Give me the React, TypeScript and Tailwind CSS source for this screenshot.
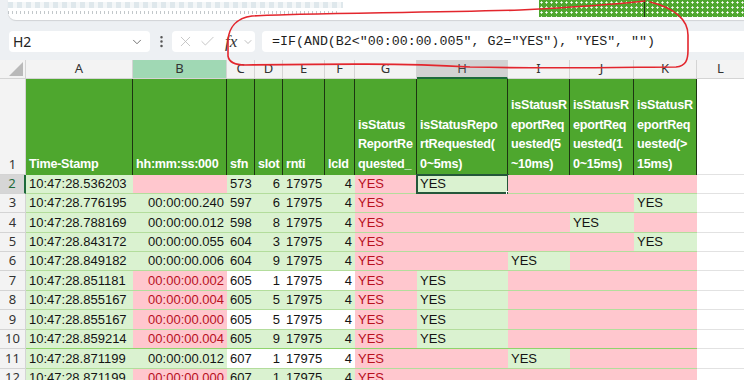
import React from "react";
import { ChevronDown, EllipsisVertical, X, Check } from "lucide-react";

type Fill = "g" | "p" | "w";

const COLS = [107, 94, 28, 28, 42, 30, 62, 91, 62, 64, 63];
const LETTERS = ["A", "B", "C", "D", "E", "F", "G", "H", "I", "J", "K", "L"];
const ROW_H = [19, 19, 20, 19, 19, 20, 19, 20, 19, 20, 19];

type Row = {
  a: string;
  b: string;
  bf: Fill;
  c: string;
  d: string;
  cf: Fill;
  yes: "H" | "I" | "J" | "K" | "";
};

const ROWS: Row[] = [
  { a: "10:47:28.536203", b: "", bf: "p", c: "573", d: "6", cf: "g", yes: "H" },
  { a: "10:47:28.776195", b: "00:00:00.240", bf: "g", c: "597", d: "6", cf: "g", yes: "K" },
  { a: "10:47:28.788169", b: "00:00:00.012", bf: "g", c: "598", d: "8", cf: "g", yes: "J" },
  { a: "10:47:28.843172", b: "00:00:00.055", bf: "g", c: "604", d: "3", cf: "g", yes: "K" },
  { a: "10:47:28.849182", b: "00:00:00.006", bf: "g", c: "604", d: "9", cf: "g", yes: "I" },
  { a: "10:47:28.851181", b: "00:00:00.002", bf: "p", c: "605", d: "1", cf: "w", yes: "H" },
  { a: "10:47:28.855167", b: "00:00:00.004", bf: "p", c: "605", d: "5", cf: "g", yes: "H" },
  { a: "10:47:28.855167", b: "00:00:00.000", bf: "p", c: "605", d: "5", cf: "w", yes: "H" },
  { a: "10:47:28.859214", b: "00:00:00.004", bf: "p", c: "605", d: "9", cf: "g", yes: "H" },
  { a: "10:47:28.871199", b: "00:00:00.012", bf: "g", c: "607", d: "1", cf: "w", yes: "I" },
  { a: "10:47:28.871199", b: "00:00:00.000", bf: "p", c: "607", d: "1", cf: "g", yes: "" },
];

const HEADERS: string[][] = [
  ["Time-Stamp"],
  ["hh:mm:ss:000"],
  ["sfn"],
  ["slot"],
  ["rnti"],
  ["lcId"],
  ["isStatus", "ReportRe", "quested_"],
  ["isStatusRepo", "rtRequested(", "0~5ms)"],
  ["isStatusR", "eportReq", "uested(5", "~10ms)"],
  ["isStatusR", "eportReq", "uested(1", "0~15ms)"],
  ["isStatusR", "eportReq", "uested(>", "15ms)"],
];

const fillClass = (f: Fill) =>
  f === "g" ? "bg-[#daf2d0]" : f === "p" ? "bg-[#ffc7ce]" : "bg-white";

function Cell({
  fill,
  text,
  right,
  red,
  h,
  bottom,
  children,
}: {
  fill: Fill;
  text?: string;
  right?: boolean;
  red?: boolean;
  h: number;
  bottom: string;
  children?: React.ReactNode;
}) {
  return (
    <div
      className={`relative flex items-end whitespace-nowrap border-b text-[13px] ${bottom} ${fillClass(fill)} ${
        right ? "justify-end pr-[3px]" : "justify-start pl-[3px]"
      } ${red ? "text-[#b8101e]" : "text-[#141414]"}`}
      style={{ height: h }}
    >
      <span className="leading-[18px]">{text}</span>
      {children}
    </div>
  );
}

export default function App() {
  return (
    <div
      className="relative w-[744px] h-[380px] overflow-hidden bg-[#edf0f3]"
      style={{ fontFamily: '"Liberation Sans", Arial, sans-serif' }}
    >
      {/* top ribbon fragment */}
      <div className="h-[20px] flex">
        <div className="w-[8px]" />
        <div className="flex-1 bg-white rounded-bl-[8px] shadow-[0_1px_1px_rgba(0,0,0,0.12)] flex">
          <div className="w-[340px] flex flex-col pt-[2px] gap-[3px]">
            <div className="h-[6px] w-[335px] bg-[repeating-linear-gradient(90deg,#dfe8ec_0px,#dfe8ec_5px,#f4f7f8_5px,#f4f7f8_9px)]" />
            <div className="h-[3px] w-[330px] bg-[repeating-linear-gradient(90deg,#9aa3a8_0px,#9aa3a8_1px,transparent_1px,transparent_4px)] opacity-60" />
          </div>
          <div className="w-[191px]" />
          <div className="h-[17px] w-[106px] bg-[#4ea72e] bg-[radial-gradient(#ffffff_28%,transparent_29%)] bg-[length:5px_5px] border-r border-[#1f3a14]" />
          <div className="h-[17px] flex-1 bg-[#4ea72e] bg-[radial-gradient(#ffffff_28%,transparent_29%)] bg-[length:5px_5px]" />
        </div>
      </div>

      {/* formula bar */}
      <div className="h-[40px] flex items-start pt-[11px] pl-[9px]">
        <div className="w-[141px] h-[21px] bg-white rounded-[4px] flex items-center justify-between pl-[4px] pr-[6px]">
          <span
            className="text-[14px] text-[#222]"
            style={{ fontFamily: '"Noto Sans", sans-serif' }}
          >
            H2
          </span>
          <ChevronDown size={14} strokeWidth={1.4} className="text-[#555]" />
        </div>
        <div className="w-[22px] h-[21px] flex items-center justify-center">
          <EllipsisVertical size={15} strokeWidth={2} className="text-[#555]" />
        </div>
        <div className="w-[83px] h-[21px] bg-white rounded-[4px] flex items-center pl-[5px] gap-[5px]">
          <X size={17} strokeWidth={1.1} className="text-[#b8b8b8]" />
          <Check size={17} strokeWidth={1.1} className="text-[#b8b8b8]" />
          <span
            className="italic text-[17px] leading-none text-[#333] ml-[4px]"
            style={{ fontFamily: '"Liberation Serif", serif' }}
          >
            fx
          </span>
          <ChevronDown size={12} strokeWidth={1.3} className="text-[#9a9a9a]" />
        </div>
        <div className="ml-[7px] flex-1 h-[21px] bg-white rounded-l-[4px] flex items-center pl-[10px]">
          <span
            className="text-[13.3px] text-[#1e1e1e] whitespace-pre"
            style={{ fontFamily: '"Liberation Mono", monospace' }}
          >
            {'=IF(AND(B2<"00:00:00.005", G2="YES"), "YES", "")'}
          </span>
        </div>
      </div>

      {/* sheet */}
      <div className="flex">
        {/* row header column */}
        <div className="w-[26px] flex flex-col" style={{ fontFamily: '"Noto Sans", sans-serif' }}>
          <div className="h-[19px] bg-[#f3f3f3] border-r border-b border-[#d4d4d4] relative">
            <div className="absolute right-[2px] bottom-[2px] w-0 h-0 border-l-[14px] border-l-transparent border-b-[14px] border-b-[#b9b9b9]" />
          </div>
          <div className="h-[96px] bg-[#f3f3f3] border-r border-b border-[#d4d4d4] flex items-end justify-center text-[13px] text-[#333] leading-[20px]">
            1
          </div>
          {ROWS.map((_, i) => (
            <div
              key={i}
              className={`flex items-end justify-center text-[13px] leading-[19px] border-b border-[#d4d4d4] ${
                i === 0
                  ? "bg-[#d6d6d6] text-[#1e6b3b] border-r-2 border-r-[#1e6b3b]"
                  : "bg-[#f3f3f3] text-[#333] border-r border-r-[#d4d4d4]"
              }`}
              style={{ height: ROW_H[i] }}
            >
              {i + 2}
            </div>
          ))}
        </div>

        {/* columns */}
        {COLS.map((w, ci) => {
          const letter = LETTERS[ci];
          return (
            <div key={ci} className="flex flex-col" style={{ width: w }}>
              <div
                className={`h-[19px] flex items-center justify-center text-[13px] border-r border-[#d4d4d4] ${
                  letter === "B"
                    ? "bg-[#a0d8b4] text-[#333] border-b border-b-[#d4d4d4]"
                    : letter === "H"
                    ? "bg-[#d2d2d2] text-[#444] border-b-2 border-b-[#1e6b3b]"
                    : "bg-[#f3f3f3] text-[#333] border-b border-b-[#d4d4d4]"
                }`}
                style={{ fontFamily: '"Noto Sans", sans-serif' }}
              >
                {letter}
              </div>
              <div className="h-[96px] bg-[#4ea72e] border-r border-[#1d3512] flex flex-col justify-end pl-[3px] pb-[1px] text-white font-bold text-[12.6px] tracking-[-0.25px] leading-[19.5px] whitespace-nowrap overflow-hidden">
                {HEADERS[ci].map((l, k) => (
                  <div key={k}>{l}</div>
                ))}
              </div>
              {ROWS.map((r, ri) => {
                const h = ROW_H[ri];
                const bottom = ri === 8 ? "border-[#8fd36c]" : "border-[#b3dd9c]";
                if (letter === "A") return <Cell key={ri} fill="g" text={r.a} h={h} bottom={bottom} />;
                if (letter === "B")
                  return <Cell key={ri} fill={r.bf} text={r.b} right red={r.bf === "p"} h={h} bottom={bottom} />;
                if (letter === "C") return <Cell key={ri} fill={r.cf} text={r.c} h={h} bottom={bottom} />;
                if (letter === "D") return <Cell key={ri} fill={r.cf} text={r.d} right h={h} bottom={bottom} />;
                if (letter === "E") return <Cell key={ri} fill={r.cf} text="17975" h={h} bottom={bottom} />;
                if (letter === "F") return <Cell key={ri} fill={r.cf} text="4" right h={h} bottom={bottom} />;
                if (letter === "G") return <Cell key={ri} fill="p" text="YES" red h={h} bottom={bottom} />;
                const isYes = r.yes === letter;
                return (
                  <Cell key={ri} fill={isYes ? "g" : "p"} text={isYes ? "YES" : ""} h={h} bottom={bottom}>
                    {letter === "H" && ri === 0 && (
                      <>
                        <div className="absolute inset-[-1px] border-2 border-[#24573a] pointer-events-none" />
                        <div className="absolute right-[-4px] bottom-[-4px] w-[6px] h-[6px] bg-[#24573a] border border-white" />
                      </>
                    )}
                  </Cell>
                );
              })}
            </div>
          );
        })}

        {/* column L */}
        <div className="flex-1 flex flex-col">
          <div
            className="h-[19px] flex items-center justify-center text-[13px] bg-[#f3f3f3] text-[#333] border-b border-[#d4d4d4]"
            style={{ fontFamily: '"Noto Sans", sans-serif' }}
          >
            L
          </div>
          <div className="h-[96px] bg-white border-b border-[#e2e2e2]" />
          {ROWS.map((_, ri) => (
            <div key={ri} className="bg-white border-b border-[#e2e2e2]" style={{ height: ROW_H[ri] }} />
          ))}
        </div>
      </div>

      {/* red hand-drawn annotation */}
      <svg className="absolute left-0 top-0 pointer-events-none" width="744" height="380" viewBox="0 0 744 380">
        <path
          d="M 645 1 C 600 6, 560 8, 520 10 C 420 13, 300 13, 252 16 C 236 18, 229 28, 228 40 L 228 56 C 229 62, 234 65, 245 65 C 330 64, 400 63, 470 67 C 560 69, 640 67, 676 67 C 686 66, 688 60, 688 50 L 688 35 C 688 20, 675 8, 650 2"
          fill="none"
          stroke="#e3262d"
          strokeWidth="1.6"
          strokeLinecap="round"
        />
      </svg>
    </div>
  );
}
